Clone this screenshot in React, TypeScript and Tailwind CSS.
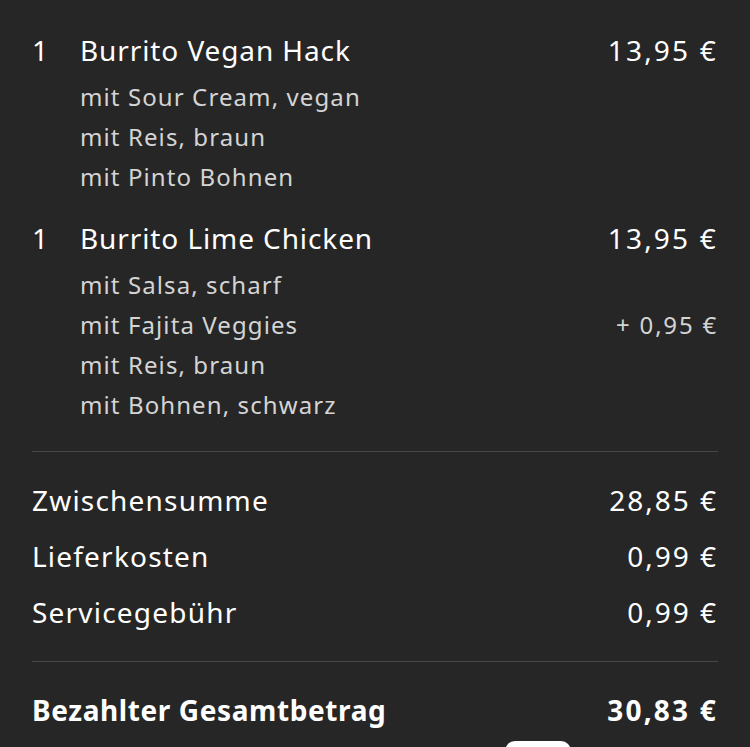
const items = [
  {
    qty: 1,
    name: 'Burrito Vegan Hack',
    price: '13,95 €',
    extras: [
      { label: 'mit Sour Cream, vegan' },
      { label: 'mit Reis, braun' },
      { label: 'mit Pinto Bohnen' },
    ],
  },
  {
    qty: 1,
    name: 'Burrito Lime Chicken',
    price: '13,95 €',
    extras: [
      { label: 'mit Salsa, scharf' },
      { label: 'mit Fajita Veggies', price: '+ 0,95 €' },
      { label: 'mit Reis, braun' },
      { label: 'mit Bohnen, schwarz' },
    ],
  },
];

const totals = [
  { label: 'Zwischensumme', value: '28,85 €' },
  { label: 'Lieferkosten', value: '0,99 €' },
  { label: 'Servicegebühr', value: '0,99 €' },
];

export default function App() {
  return (
    <div
      className="min-h-screen bg-[#262626] px-8 pt-[28px] overflow-hidden"
      style={{ fontFamily: '"Noto Sans", "Open Sans", sans-serif' }}
    >
      {/* Order items */}
      <div className="flex flex-col gap-[19px]">
        {items.map((item) => (
          <div key={item.name}>
            <div className="flex items-center justify-between h-[44px] text-[28px] text-white">
              <div className="flex">
                <span className="w-[48px]">{item.qty}</span>
                <span className="tracking-[0.9px]">{item.name}</span>
              </div>
              <span className="tracking-[2.2px]">{item.price}</span>
            </div>
            <div className="mt-[5px] pl-[48px]">
              {item.extras.map((extra) => (
                <div
                  key={extra.label}
                  className="flex justify-between h-[40px] items-center text-[24px] text-[#d4d4d4]"
                >
                  <span className="tracking-[1.1px]">{extra.label}</span>
                  {extra.price && <span className="tracking-[1.8px]">{extra.price}</span>}
                </div>
              ))}
            </div>
          </div>
        ))}
      </div>

      <div className="mt-[26px] h-px bg-[#474747]" />

      {/* Totals */}
      <div className="pt-[20px] pb-[21px]">
        {totals.map((row) => (
          <div
            key={row.label}
            className="flex justify-between items-center h-[56px] text-[28px] text-white"
          >
            <span className="tracking-[1.2px]">{row.label}</span>
            <span className="tracking-[2px]">{row.value}</span>
          </div>
        ))}
      </div>

      <div className="h-px bg-[#474747]" />

      <div className="flex justify-between items-center h-[56px] mt-[20px] text-[28px] font-bold text-white">
        <span className="tracking-[0.6px]">Bezahlter Gesamtbetrag</span>
        <span className="tracking-[2.2px]">30,83 €</span>
      </div>

      <div className="ml-[473px] mt-[3px] w-[66px] h-[20px] rounded-t-[10px] bg-white" />
    </div>
  );
}
